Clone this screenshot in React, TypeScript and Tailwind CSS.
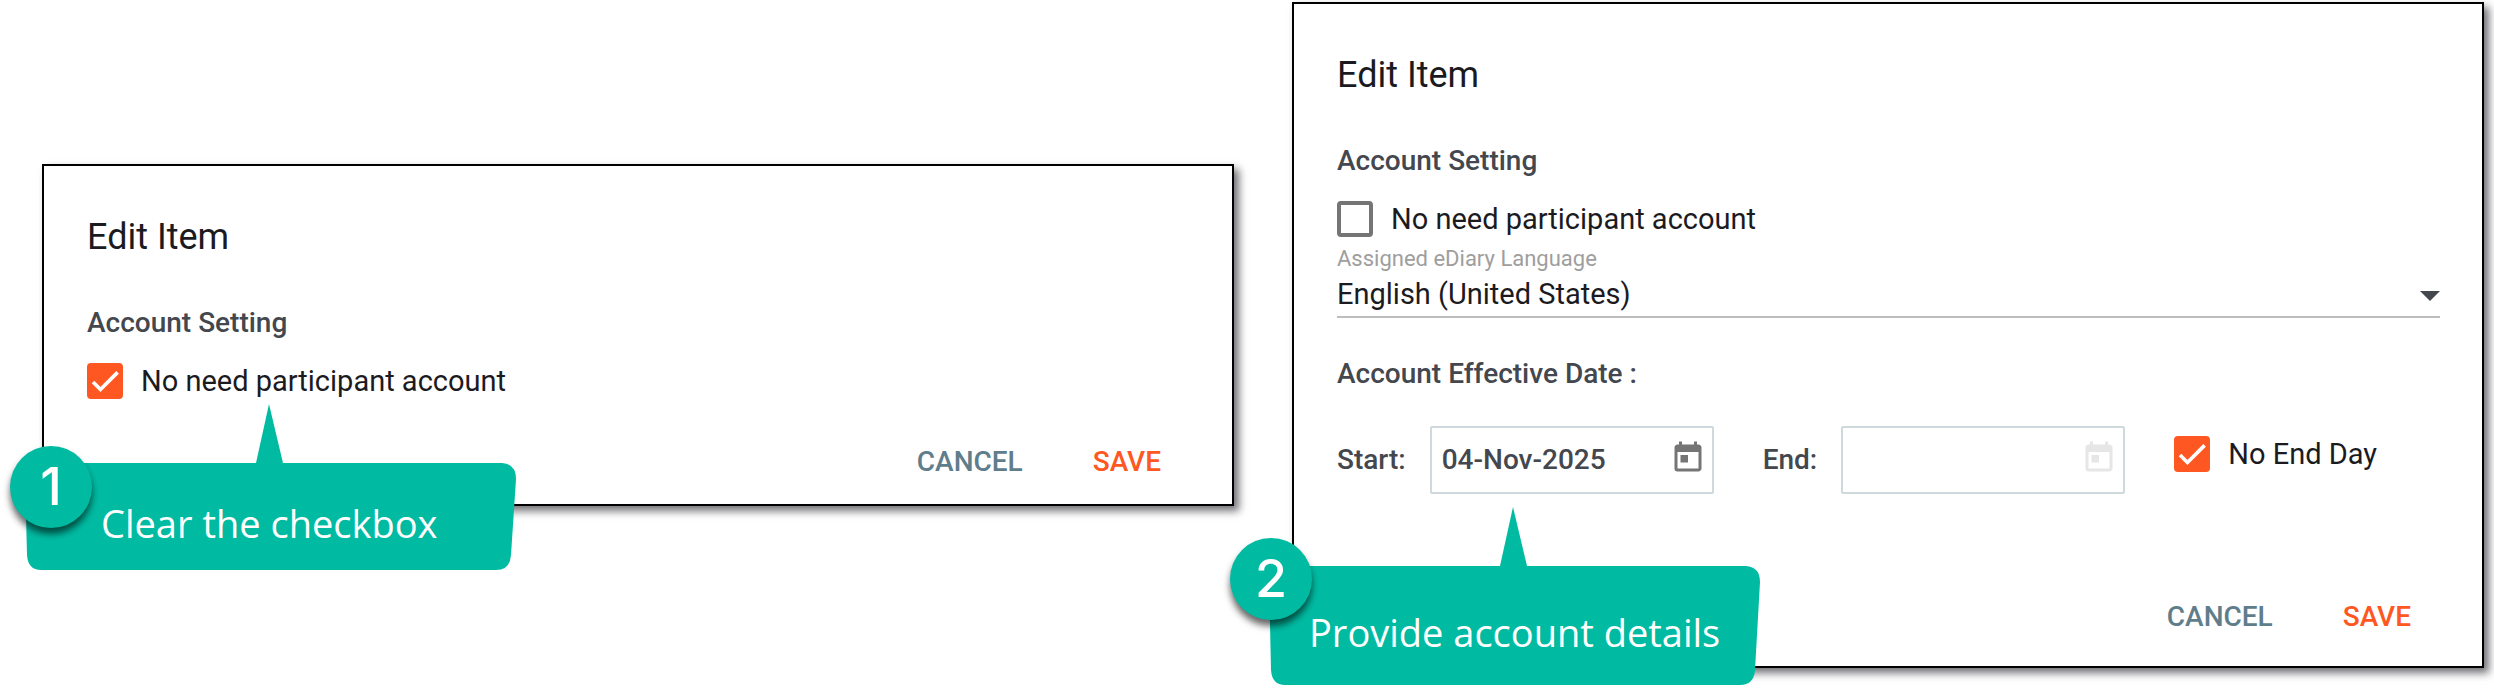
import React, { useState } from "react";
import { MdToday } from "react-icons/md";

type CheckboxProps = {
  id: string;
  label: string;
  initial?: boolean;
};

function Checkbox({ id, label, initial = false }: CheckboxProps) {
  const [checked, setChecked] = useState(initial);

  return (
    <div className="flex items-center gap-[18px]">
      <span className="relative size-9 shrink-0">
        <input
          id={id}
          type="checkbox"
          checked={checked}
          onChange={(e) => setChecked(e.target.checked)}
          className="block size-9 appearance-none rounded-sm border-4 border-[#757575] checked:border-[#ff5722] checked:bg-[#ff5722]"
        />
        {checked && (
          <svg
            viewBox="0 0 24 24"
            className="pointer-events-none absolute top-1 left-1 size-7"
            fill="none"
            stroke="white"
            strokeWidth="3.12"
          >
            <path d="M1.73 12.91 8.1 19.28 22.79 4.59" />
          </svg>
        )}
      </span>
      <label htmlFor={id} className="text-[29px] leading-9 whitespace-nowrap text-[#1b1b1f]">
        {label}
      </label>
    </div>
  );
}

type DateFieldProps = {
  id: string;
  label: string;
  value?: string;
  disabled?: boolean;
};

function DateField({ id, label, value = "", disabled = false }: DateFieldProps) {
  return (
    <div className="flex items-center gap-6 font-medium text-[#44474e]">
      <label htmlFor={id} className="text-[28px] leading-9">
        {label}
      </label>
      <div className="flex h-[68px] w-[284px] items-center rounded-xs border-2 border-[#cfd8dc] pr-1.5 pl-2.5">
        <input
          id={id}
          type="text"
          defaultValue={value}
          disabled={disabled}
          className="min-w-0 flex-1 text-[28px] leading-9 outline-none"
        />
        <button
          type="button"
          aria-label="Open calendar"
          disabled={disabled}
          className="pb-1 text-[#757575] disabled:text-[#e6e6e6]"
        >
          <MdToday className="size-9" />
        </button>
      </div>
    </div>
  );
}

function Actions() {
  return (
    <div className="flex justify-end gap-[70px] pr-[29px] text-[28px] leading-9 font-medium">
      <button type="button" className="text-[#607d8b]">
        CANCEL
      </button>
      <button type="button" className="text-[#ff5722]">
        SAVE
      </button>
    </div>
  );
}

function Heading({ children }: { children: React.ReactNode }) {
  return <h3 className="text-[28px] leading-9 font-medium text-[#44474e]">{children}</h3>;
}

function Dialog({ children }: { children: React.ReactNode }) {
  return (
    <section className="relative border-2 border-black bg-white pt-[49px] pr-[42px] pl-[43px] shadow-[5px_5px_8px_rgba(20,16,24,0.6)]">
      <h2 className="mb-[46px] text-[36px] leading-[44px] text-[#1b1b1f]">Edit Item</h2>
      {children}
    </section>
  );
}

// speech bubble with a pointer on top, slightly narrower at the bottom
function Bubble({ height, children }: { height: number; children: React.ReactNode }) {
  const bottom = 59 + height;

  return (
    <div className="relative w-[491px] pt-[59px]">
      <svg
        width="491"
        height={bottom}
        viewBox={`0 0 491 ${bottom}`}
        className="absolute top-0 left-0"
        fill="#00bba2"
      >
        <path
          d={`M14 59H231L244 0L258 59H477Q491 60 491 75L486 ${bottom - 15}Q485 ${bottom} 471 ${bottom}H16Q3 ${bottom} 2 ${bottom - 15}L0 73Q0 59 14 59Z`}
        />
      </svg>
      {children}
    </div>
  );
}

function StepBadge({ children }: { children: React.ReactNode }) {
  return (
    <span className="flex size-[82px] items-center justify-center rounded-full bg-[#00bba2] font-[Inter,sans-serif] text-[52px] leading-none font-medium text-white shadow-[0_6px_7px_rgba(0,0,0,0.6)]">
      {children}
    </span>
  );
}

export default function App() {
  return (
    <main className="grid grid-cols-2 items-center gap-[58px] bg-white pt-0.5 pr-2.5 pb-[22px] pl-[42px] font-[Roboto,sans-serif]">
      <Dialog>
        <Heading>Account Setting</Heading>
        <div className="mt-[22px] mb-[45px]">
          <Checkbox id="no-account-1" label="No need participant account" initial />
        </div>
        <div className="pb-6">
          <Actions />
        </div>

        <div className="absolute top-[238px] -left-[19px]">
          <Bubble height={107}>
            <p className="relative pt-[34px] pl-[76px] font-['Open_Sans',sans-serif] text-[38px] leading-[52px] whitespace-nowrap text-white">
              Clear the checkbox
            </p>
          </Bubble>
        </div>
        <div className="absolute top-[280px] -left-[34px]">
          <StepBadge>1</StepBadge>
        </div>
      </Dialog>

      <Dialog>
        <Heading>Account Setting</Heading>
        <div className="mt-[22px] mb-2">
          <Checkbox id="no-account-2" label="No need participant account" />
        </div>
        <label htmlFor="language" className="block text-[22px] leading-7 text-[#9e9e9e]">
          Assigned eDiary Language
        </label>
        <div className="relative mb-[38px]">
          <select
            id="language"
            className="block h-[45px] w-full appearance-none border-b-2 border-[#bdbdbd] text-[29px] text-[#1b1b1f] outline-none"
          >
            <option>English (United States)</option>
          </select>
          <svg
            viewBox="0 0 20 10"
            className="pointer-events-none absolute top-[18px] right-0 h-2.5 w-5"
            fill="#44474e"
          >
            <path d="M0 0H20L10 10Z" />
          </svg>
        </div>
        <Heading>Account Effective Date :</Heading>
        <div className="mt-[34px] mb-[105px] flex items-start gap-[49px]">
          <DateField id="start" label="Start:" value="04-Nov-2025" />
          <DateField id="end" label="End:" disabled />
          <div className="pt-2.5">
            <Checkbox id="no-end" label="No End Day" initial />
          </div>
        </div>
        <div className="pb-[31px]">
          <Actions />
        </div>

        <div className="absolute top-[503px] -left-[25px]">
          <Bubble height={119}>
            <p className="relative pt-10 pl-10 font-['Open_Sans',sans-serif] text-[38px] leading-[52px] whitespace-nowrap text-white">
              Provide account details
            </p>
          </Bubble>
        </div>
        <div className="absolute top-[534px] -left-16">
          <StepBadge>2</StepBadge>
        </div>
      </Dialog>
    </main>
  );
}
